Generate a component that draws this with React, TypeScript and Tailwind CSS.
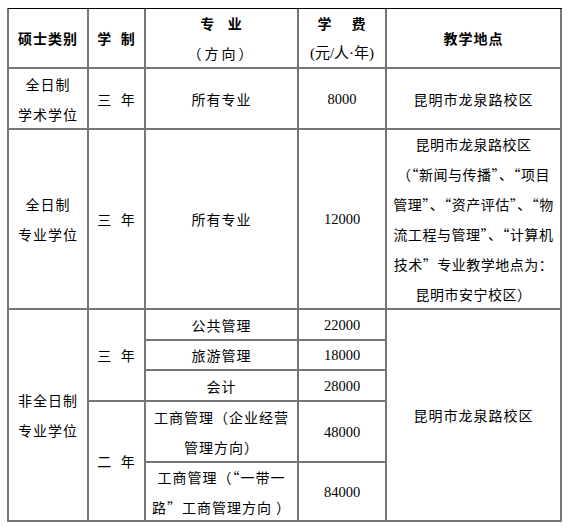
const cjk = "font-['Noto_Sans_CJK_SC',sans-serif]";
const num = "font-['Liberation_Serif','Noto_Sans_CJK_SC',serif]";

const cell =
  "flex flex-col items-center justify-center text-center border-r-2 border-b-2 border-[#767676] leading-[30px]";

function Lines({ lines, className = "" }: { lines: string[]; className?: string }) {
  return (
    <>
      {lines.map((l) => (
        <div key={l} className={className}>
          {l}
        </div>
      ))}
    </>
  );
}

export default function App() {
  return (
    <div className={`bg-white w-[570px] h-[529px] pt-[8px] pl-[7px] text-black ${cjk}`}>
      <div className="grid grid-cols-[80px_57px_153px_88px_175px] grid-rows-[60px_61px_180px_31px_30px_31px_61px_59px] w-[555px] border-l-2 border-[#767676] border-t border-t-black text-[14px] tracking-[1px]">
        {/* header */}
        <div className={`${cell} col-start-1 row-start-1 font-bold`}>硕士类别</div>
        <div className={`${cell} col-start-2 row-start-1 font-bold`}>学&nbsp;&nbsp;制</div>
        <div className={`${cell} col-start-3 row-start-1`}>
          <div className="font-bold">专&nbsp;&nbsp;&nbsp;业</div>
          <div className="tracking-[3px]">（方向）</div>
        </div>
        <div className={`${cell} col-start-4 row-start-1`}>
          <div className="font-bold">学　&nbsp;费</div>
          <div className={`${num} tracking-normal text-[15px]`}>(元/人·年)</div>
        </div>
        <div className={`${cell} col-start-5 row-start-1 font-bold`}>教学地点</div>

        {/* 全日制 学术学位 */}
        <div className={`${cell} col-start-1 row-start-2`}>
          <Lines lines={["全日制", "学术学位"]} />
        </div>
        <div className={`${cell} col-start-2 row-start-2`}>三&nbsp;&nbsp;年</div>
        <div className={`${cell} col-start-3 row-start-2`}>所有专业</div>
        <div className={`${cell} col-start-4 row-start-2 ${num} text-[14.5px] tracking-normal`}>8000</div>
        <div className={`${cell} col-start-5 row-start-2`}>昆明市龙泉路校区</div>

        {/* 全日制 专业学位 */}
        <div className={`${cell} col-start-1 row-start-3`}>
          <Lines lines={["全日制", "专业学位"]} />
        </div>
        <div className={`${cell} col-start-2 row-start-3`}>三&nbsp;&nbsp;年</div>
        <div className={`${cell} col-start-3 row-start-3`}>所有专业</div>
        <div className={`${cell} col-start-4 row-start-3 ${num} text-[14.5px] tracking-normal`}>12000</div>
        <div className={`${cell} col-start-5 row-start-3 tracking-[0.5px]`}>
          <Lines
            lines={[
              "昆明市龙泉路校区",
              "（“新闻与传播”、“项目",
              "管理”、“资产评估”、“物",
              "流工程与管理”、“计算机",
              "技术”专业教学地点为：",
              "昆明市安宁校区）",
            ]}
          />
        </div>

        {/* 非全日制 专业学位 */}
        <div className={`${cell} col-start-1 row-start-4 row-span-5`}>
          <Lines lines={["非全日制", "专业学位"]} />
        </div>
        <div className={`${cell} col-start-2 row-start-4 row-span-3`}>三&nbsp;&nbsp;年</div>
        <div className={`${cell} col-start-2 row-start-7 row-span-2`}>二&nbsp;&nbsp;年</div>

        <div className={`${cell} col-start-3 row-start-4`}>公共管理</div>
        <div className={`${cell} col-start-3 row-start-5`}>旅游管理</div>
        <div className={`${cell} col-start-3 row-start-6`}>会计</div>
        <div className={`${cell} col-start-3 row-start-7`}>
          <Lines lines={["工商管理（企业经营", "管理方向）"]} />
        </div>
        <div className={`${cell} col-start-3 row-start-8`}>
          <Lines lines={["工商管理（“一带一", "路”工商管理方向 ）"]} />
        </div>

        <div className={`${cell} col-start-4 row-start-4 ${num} text-[14.5px] tracking-normal`}>22000</div>
        <div className={`${cell} col-start-4 row-start-5 ${num} text-[14.5px] tracking-normal`}>18000</div>
        <div className={`${cell} col-start-4 row-start-6 ${num} text-[14.5px] tracking-normal`}>28000</div>
        <div className={`${cell} col-start-4 row-start-7 ${num} text-[14.5px] tracking-normal`}>48000</div>
        <div className={`${cell} col-start-4 row-start-8 ${num} text-[14.5px] tracking-normal`}>84000</div>

        <div className={`${cell} col-start-5 row-start-4 row-span-5`}>昆明市龙泉路校区</div>
      </div>
    </div>
  );
}
